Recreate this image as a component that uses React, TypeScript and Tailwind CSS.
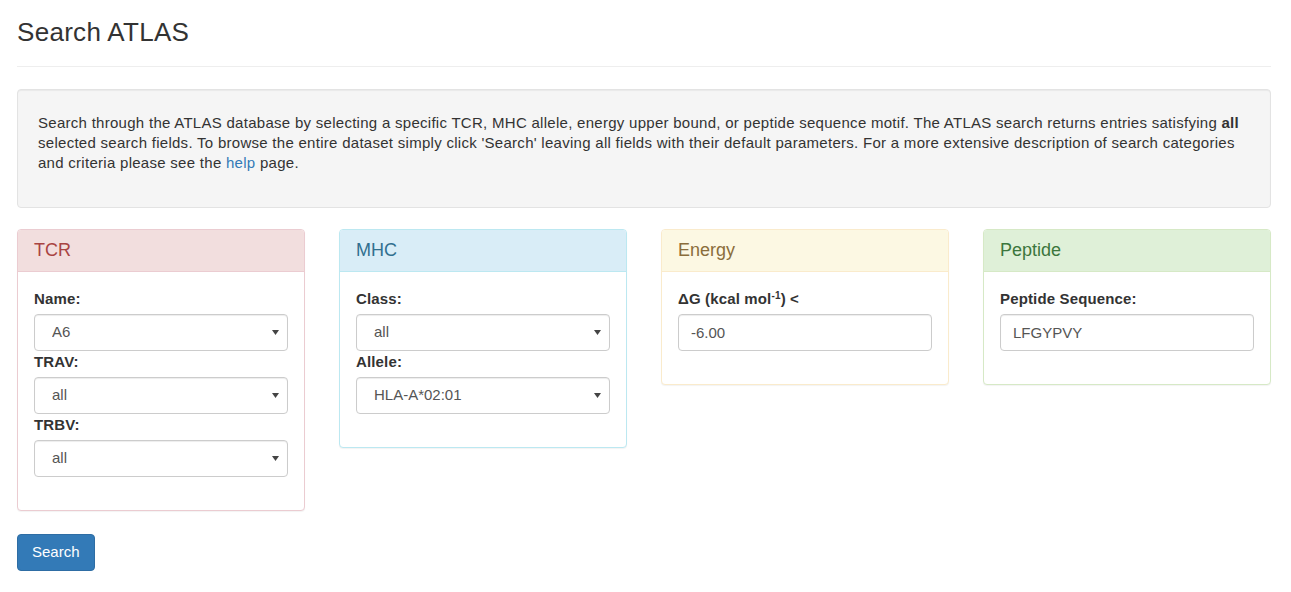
import type { ReactNode } from 'react';

type Tone = 'danger' | 'info' | 'warning' | 'success';

// bootstrap-like contextual panel colours
const tones: Record<Tone, { border: string; head: string }> = {
  danger: { border: 'border-[#ebccd1]', head: 'bg-[#f2dede] text-[#a94442] border-[#ebccd1]' },
  info: { border: 'border-[#bce8f1]', head: 'bg-[#d9edf7] text-[#31708f] border-[#bce8f1]' },
  warning: { border: 'border-[#faebcc]', head: 'bg-[#fcf8e3] text-[#8a6d3b] border-[#faebcc]' },
  success: { border: 'border-[#d6e9c6]', head: 'bg-[#dff0d8] text-[#3c763d] border-[#d6e9c6]' },
};

function Panel({ title, tone, children }: { title: string; tone: Tone; children: ReactNode }) {
  const t = tones[tone];
  return (
    <div className={`rounded-[4px] border bg-white shadow-[0_1px_1px_rgba(0,0,0,0.05)] ${t.border}`}>
      <div className={`flex h-[42px] items-center rounded-t-[3px] border-b px-4 pt-[1px] text-[18px] ${t.head}`}>{title}</div>
      <div className="px-4 pt-[16px] pb-[33px]">{children}</div>
    </div>
  );
}

function Label({ children }: { children: ReactNode }) {
  return (
    <label className="mb-[5px] block text-[15px] font-bold leading-[21px] tracking-[0.15px] text-[#333]">{children}</label>
  );
}

function Select({ value, options }: { value: string; options: string[] }) {
  return (
    <div className="relative">
      <select
        defaultValue={value}
        className="block h-[37px] w-full appearance-none rounded-[4px] border border-[#ccc] bg-white pl-[17px] pr-6 text-[15px] text-[#555] shadow-[inset_0_1px_1px_rgba(0,0,0,0.075)] outline-none"
      >
        {options.map((o) => (
          <option key={o}>{o}</option>
        ))}
      </select>
      <svg className="pointer-events-none absolute right-[9px] top-[16px]" width="7" height="5" viewBox="0 0 7 5">
        <path d="M0 0h7L3.5 5z" fill="#444" />
      </svg>
    </div>
  );
}

function TextInput({ value }: { value: string }) {
  return (
    <input
      defaultValue={value}
      className="block h-[37px] w-full rounded-[4px] border border-[#ccc] bg-white px-3 text-[15px] text-[#555] shadow-[inset_0_1px_1px_rgba(0,0,0,0.075)] outline-none"
    />
  );
}

export default function App() {
  return (
    <div className="min-h-screen bg-white pl-[17px] pr-[20px] font-['Liberation_Sans',Arial,sans-serif] text-[15px] text-[#333]">
      <div className="mb-[22px] border-b border-[#eee] pt-[18px] pb-[19px]">
        <h1 className="text-[26px] leading-[1.1] font-normal tracking-[0.3px]">Search ATLAS</h1>
      </div>

      <div className="rounded-[4px] border border-[#e3e3e3] bg-[#f5f5f5] px-5 pt-[23px] pb-[34px] shadow-[inset_0_1px_1px_rgba(0,0,0,0.05)]">
        <p className="leading-[20px] tracking-[0.28px]">
          Search through the ATLAS database by selecting a specific TCR, MHC allele, energy upper bound, or peptide sequence
          motif. The ATLAS search returns entries satisfying <b>all</b> selected search fields. To browse the entire dataset
          simply click 'Search' leaving all fields with their default parameters. For a more extensive description of search
          categories and criteria please see the{' '}
          <a href="#" className="text-[#337ab7]">
            help
          </a>{' '}
          page.
        </p>
      </div>

      <div className="mt-[21px] grid grid-cols-4 items-start gap-[34px]">
        <Panel title="TCR" tone="danger">
          <Label>Name:</Label>
          <Select value="A6" options={['A6', 'all']} />
          <Label>TRAV:</Label>
          <Select value="all" options={['all']} />
          <Label>TRBV:</Label>
          <Select value="all" options={['all']} />
        </Panel>
        <Panel title="MHC" tone="info">
          <Label>Class:</Label>
          <Select value="all" options={['all']} />
          <Label>Allele:</Label>
          <Select value="HLA-A*02:01" options={['HLA-A*02:01', 'all']} />
        </Panel>
        <Panel title="Energy" tone="warning">
          <Label>
            ΔG (kcal mol<sup className="text-[10px]">-1</sup>) &lt;
          </Label>
          <TextInput value="-6.00" />
        </Panel>
        <Panel title="Peptide" tone="success">
          <Label>Peptide Sequence:</Label>
          <TextInput value="LFGYPVY" />
        </Panel>
      </div>

      <button className="mt-[23px] h-[37px] rounded-[4px] border border-[#2e6da4] bg-[#337ab7] px-[14px] text-[15px] text-white">
        Search
      </button>
    </div>
  );
}
